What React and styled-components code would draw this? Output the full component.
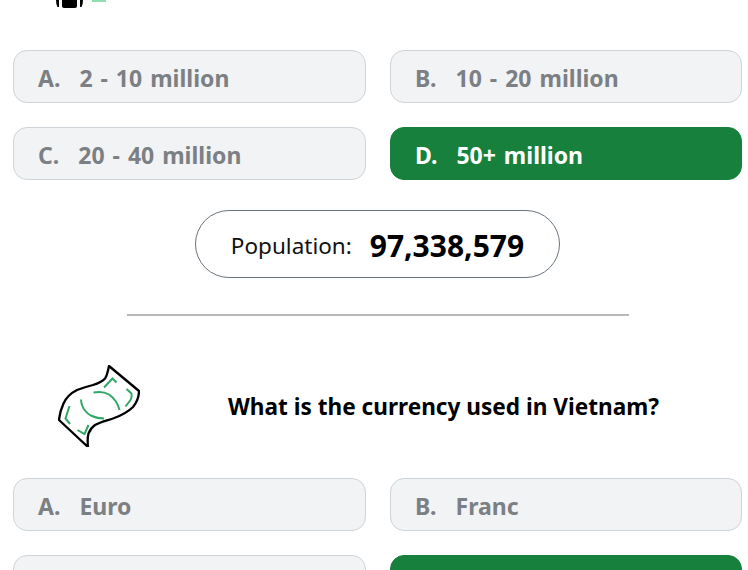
import React from "react";
import styled, { createGlobalStyle } from "styled-components";

const Global = createGlobalStyle`
  html, body { margin: 0; padding: 0; background: #fff; height: 570px; overflow: hidden; }
  body { font-family: "Noto Sans", "Open Sans", "Liberation Sans", sans-serif; }
`;

const Page = styled.div`
  width: 748px;
  height: 570px;
  overflow: hidden;
  display: flex;
  flex-direction: column;
`;

const TopStub = styled.div`
  height: 50px;
  flex: none;
  padding-left: 55px;
  overflow: hidden;
`;

const Grid = styled.div`
  flex: none;
  display: grid;
  grid-template-columns: 353px 352px;
  grid-auto-rows: 53px;
  column-gap: 24px;
  row-gap: 24px;
  padding-left: 13px;
`;

const Option = styled.div`
  box-sizing: border-box;
  display: flex;
  align-items: center;
  padding: 3px 0 0 24px;
  border-radius: 14px;
  font-size: 23px;
  font-weight: 700;
  word-spacing: 2px;
  white-space: pre;
  border: 1px solid ${(p) => (p.$correct ? "#17803d" : "#cfd4d8")};
  background: ${(p) => (p.$correct ? "#17803d" : "#f1f3f5")};
  color: ${(p) => (p.$correct ? "#ffffff" : "#7c7f83")};
`;

const Letter = styled.span`
  margin-right: 19px;
`;

const PillRow = styled.div`
  flex: none;
  display: flex;
  margin-top: 30px;
  padding-left: 195px;
`;

const Pill = styled.div`
  box-sizing: border-box;
  width: 365px;
  height: 68px;
  padding-top: 2px;
  border: 1px solid #68747e;
  border-radius: 34px;
  display: flex;
  align-items: center;
  justify-content: center;
  gap: 18px;
  color: #111;
`;

const PopLabel = styled.span`
  font-size: 22.5px;
  font-weight: 400;
`;

const PopValue = styled.span`
  font-size: 30px;
  font-weight: 700;
  color: #000;
`;

const Divider = styled.hr`
  flex: none;
  width: 502px;
  height: 2px;
  margin: 36px 0 0 127px;
  border: 0;
  background: #b9b9b9;
`;

const Question = styled.div`
  flex: none;
  display: flex;
  align-items: center;
  height: 82px;
  margin-top: 49px;
  padding-left: 58px;
  margin-bottom: 31px;
`;

const QuestionText = styled.h2`
  margin: 0 0 0 88px;
  font-size: 22.6px;
  font-weight: 700;
  color: #000;
  white-space: nowrap;
`;

const BlockSvg = styled.svg`
  display: block;
  flex: none;
`;

const BillIcon = () => (
  <BlockSvg width="82" height="82" viewBox="0 0 82 82" fill="none">
    <path
      d="M51 1 C50 6 49 11 47 13.5 C44 17 40 18.5 35 20 C29 21.5 24 23 19 25 C12 28.5 8 33 5.5 38.5 C3 44 1.5 49 1 55 L30 82 C29.5 77 29.5 72 30.5 68.5 C32 65 34 62 37 60 C42 57 49 55.5 55 53.5 C62 51 70 47 75 42 C79 37 81 32 81 26 Z"
      fill="#fff"
      stroke="#000"
      strokeWidth="2.3"
      strokeLinejoin="round"
    />
    <g stroke="#2fa866" strokeWidth="2" strokeLinecap="butt">
      <path d="M35.5 27.5 C41 26.5 47 27 51 29.5 C56 33 60 39 61.5 45" />
      <path d="M23 34.5 C23 38 24 41 25.5 43.5 C28 47 31 50 34 51 C38 53 42 53.5 46 53.5" />
      <path d="M46 22.5 L54.5 13.5 L58.5 17.5" />
      <path d="M68.5 24 L73.5 28.5 C74 31 73.5 33 72.5 35 L67.5 41.5" />
      <path d="M11.5 41 L7.5 53.5 L12 59" />
      <path d="M19.5 65 L26.5 69 L30.5 60" />
    </g>
  </BlockSvg>
);

const TopIcon = () => (
  <BlockSvg width="60" height="9" viewBox="0 0 60 9">
    <path d="M7 0 H22 V6 Q22 8 20 8 H9 Q7 8 7 6 Z" fill="#000" />
    <path d="M1 0 H4 V7 H2.5 Q1 4 1 0 Z" fill="#000" />
    <path d="M25 0 H28 Q28 4 26.5 7 H25 Z" fill="#000" />
    <rect x="37" y="0" width="14" height="2" fill="#8fe0b0" />
  </BlockSvg>
);

const Row = ({ items }) =>
  items.map(([l, t, c]) => (
    <Option key={l} $correct={c}>
      <Letter>{l}.</Letter>
      {t}
    </Option>
  ));

export default function App() {
  return (
    <Page>
      <Global />
      <TopStub>
        <TopIcon />
      </TopStub>
      <Grid>
        <Row
          items={[
            ["A", "2 - 10 million"],
            ["B", "10 - 20 million"],
            ["C", "20 - 40 million"],
            ["D", "50+ million", true],
          ]}
        />
      </Grid>
      <PillRow>
        <Pill>
          <PopLabel>Population:</PopLabel>
          <PopValue>97,338,579</PopValue>
        </Pill>
      </PillRow>
      <Divider />
      <Question>
        <BillIcon />
        <QuestionText>What is the currency used in Vietnam?</QuestionText>
      </Question>
      <Grid>
        <Row
          items={[
            ["A", "Euro"],
            ["B", "Franc"],
            ["C", "Dollar"],
            ["D", "Dong", true],
          ]}
        />
      </Grid>
    </Page>
  );
}
